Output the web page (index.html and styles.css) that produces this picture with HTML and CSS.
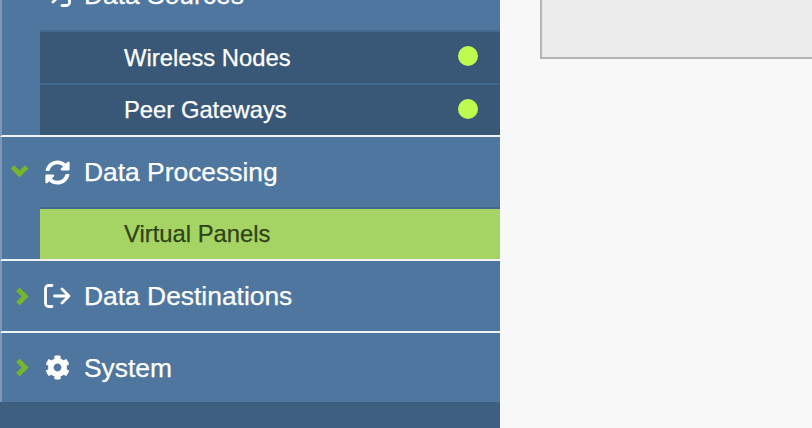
FILE: index.html
```html
<!DOCTYPE html>
<html lang="en">
<head>
<meta charset="utf-8">
<title>Sidebar</title>
<link rel="stylesheet" href="styles.css">
</head>
<body>
<svg class="defs" width="0" height="0" aria-hidden="true">
  <symbol id="chev-down" viewBox="0 0 18 13"><path d="M2.200 2.600 9 9.400l6.800-6.800" fill="none" stroke="currentColor" stroke-width="4.600"/></symbol>
  <symbol id="chev-right" viewBox="0 0 13 18"><path d="M2.600 2.200 9.400 9l-6.800 6.800" fill="none" stroke="currentColor" stroke-width="4.600"/></symbol>
  <symbol id="sync" viewBox="0 0 512 512"><path fill="currentColor" d="M370.72 133.28C339.458 104.008 298.888 87.962 255.848 88c-77.458.068-144.328 53.178-162.791 126.85-1.344 5.363-6.122 9.15-11.651 9.15H24.103c-7.498 0-13.194-6.807-11.807-14.176C33.933 94.924 134.813 8 256 8c66.448 0 126.791 26.136 171.315 68.685L463.03 40.97C478.149 25.851 504 36.559 504 57.941V192c0 13.255-10.745 24-24 24H345.941c-21.382 0-32.09-25.851-16.971-40.971l41.75-41.749zM32 296h134.059c21.382 0 32.09 25.851 16.971 40.971l-41.75 41.75c31.262 29.273 71.835 45.319 114.876 45.28 77.418-.07 144.315-53.144 162.787-126.849 1.344-5.363 6.122-9.15 11.651-9.15h57.304c7.498 0 13.194 6.807 11.807 14.176C478.067 417.076 377.187 504 256 504c-66.448 0-126.791-26.136-171.315-68.685L48.97 471.03C33.851 486.149 8 475.441 8 454.059V320c0-13.255 10.745-24 24-24z"/></symbol>
  <symbol id="cog" viewBox="0 0 512 512"><path fill="currentColor" d="M487.4 315.7l-42.6-24.6c4.3-23.2 4.3-47 0-70.2l42.6-24.6c4.9-2.8 7.1-8.6 5.5-14-11.1-35.6-30-67.8-54.7-94.6-3.8-4.1-10-5.1-14.8-2.3L380.8 110c-17.9-15.4-38.5-27.3-60.8-35.1V25.8c0-5.6-3.9-10.5-9.4-11.7-36.7-8.2-74.3-7.8-109.2 0-5.5 1.2-9.4 6.1-9.4 11.7V75c-22.2 7.9-42.8 19.8-60.8 35.1L88.7 85.5c-4.9-2.8-11-1.9-14.8 2.3-24.7 26.7-43.6 58.9-54.7 94.6-1.7 5.4.6 11.2 5.5 14L67.3 221c-4.3 23.2-4.3 47 0 70.2l-42.6 24.6c-4.9 2.8-7.1 8.6-5.5 14 11.1 35.6 30 67.8 54.7 94.6 3.8 4.1 10 5.1 14.8 2.3l42.6-24.6c17.9 15.4 38.5 27.3 60.8 35.1v49.2c0 5.6 3.9 10.5 9.4 11.7 36.7 8.2 74.3 7.8 109.2 0 5.5-1.2 9.4-6.1 9.4-11.7v-49.2c22.2-7.9 42.8-19.8 60.8-35.1l42.6 24.6c4.9 2.8 11 1.9 14.8-2.3 24.7-26.7 43.6-58.9 54.7-94.6 1.5-5.5-.7-11.3-5.6-14.1zM256 336c-44.1 0-80-35.9-80-80s35.9-80 80-80 80 35.9 80 80-35.9 80-80 80z"/></symbol>
  <symbol id="sign-out" viewBox="0 0 27 24"><path d="M8 1.500H4.500a3 3 0 0 0-3 3v15a3 3 0 0 0 3 3H8M10.500 12H25M18 5 25 12l-7 7" fill="none" stroke="currentColor" stroke-width="2.800" stroke-linecap="round" stroke-linejoin="round"/></symbol>
  <symbol id="sign-in" viewBox="0 0 27 24"><path d="M18 1.500h4.500a3 3 0 0 1 3 3v15a3 3 0 0 1-3 3H18M1.500 12H16M9 5l7 7-7 7" fill="none" stroke="currentColor" stroke-width="2.800" stroke-linecap="round" stroke-linejoin="round"/></symbol>
</svg>
<div class="app">
  <nav class="sidebar">
    <section class="section section-sources">
      <div class="head">
        <svg class="chevron chevron-down"><use href="#chev-down"/></svg>
        <svg class="icon icon-wide"><use href="#sign-in"/></svg>
        <span class="label">Data Sources</span>
      </div>
      <ul class="sublist">
        <li class="subrow subrow-first"><span>Wireless Nodes</span><i class="dot"></i></li>
        <li class="subrow"><span>Peer Gateways</span><i class="dot"></i></li>
      </ul>
    </section>
    <section class="section">
      <div class="head">
        <svg class="chevron chevron-down"><use href="#chev-down"/></svg>
        <svg class="icon"><use href="#sync"/></svg>
        <span class="label">Data Processing</span>
      </div>
      <ul class="sublist">
        <li class="subrow subrow-active"><span>Virtual Panels</span></li>
      </ul>
    </section>
    <section class="section">
      <div class="head">
        <svg class="chevron chevron-right"><use href="#chev-right"/></svg>
        <svg class="icon icon-wide"><use href="#sign-out"/></svg>
        <span class="label">Data Destinations</span>
      </div>
    </section>
    <section class="section section-last">
      <div class="head head-last">
        <svg class="chevron chevron-right"><use href="#chev-right"/></svg>
        <svg class="icon"><use href="#cog"/></svg>
        <span class="label">System</span>
      </div>
    </section>
    <div class="foot"></div>
  </nav>
  <main class="main">
    <div class="panel"></div>
  </main>
</div>
</body>
</html>
```
FILE: styles.css
```css
* { box-sizing: border-box; }
html, body { margin: 0; padding: 0; height: 100%; overflow: hidden; }
body { font-family: "Liberation Sans", Arial, sans-serif; background: #f8f8f8; }
.defs { display: block; height: 0; }
.app { display: flex; height: 428px; overflow: hidden; }
.sidebar {
  width: 500px;
  flex: none;
  margin-top: -40px;
  height: 468px;
  display: flex;
  flex-direction: column;
  background: #3f5f82;
  box-shadow: inset 2px 0 0 #7d98b6;
}
.section {
  background: #4f769f;
  border-left: 2px solid #7d98b6;
  border-bottom: 2px solid #f1f2f2;
}
.section-last { border-bottom: 0; }
.head {
  height: 70px;
  display: flex;
  align-items: center;
  color: #fff;
}
.head-last { height: 69px; }
.chevron { color: #78b42c; flex: none; }
.chevron-down { width: 19px; height: 14px; margin: -2px 16px 0 8px; }
.chevron-right { width: 14px; height: 19px; margin: 0 16px 0 13px; }
.icon { width: 25px; height: 25px; flex: none; margin-right: 14px; }
.icon-wide { width: 27px; height: 24px; margin-left: -1px; margin-right: 13px; }
.label { font-size: 26.4px; line-height: 30px; -webkit-text-stroke: 0.25px #fff; }
.sublist { list-style: none; margin: 0 0 0 38px; padding: 0; }
.subrow {
  height: 52px;
  border-top: 2px solid #44688e;
  background: #395877;
  color: #fff;
  font-size: 23.8px;
  -webkit-text-stroke: 0.25px currentColor;
  display: flex;
  align-items: center;
  justify-content: space-between;
  padding: 0 22px 0 84px;
}
.subrow-first { height: 53px; }
.subrow-active { background: #a5d364; color: #2f4317; }
.dot { width: 20px; height: 20px; border-radius: 50%; background: #bdfc4f; flex: none; margin-bottom: 3px; }
.foot { flex: 1; background: #3f5f82; }
.main { flex: 1; min-width: 0; padding-left: 40px; overflow: hidden; }
.panel {
  height: 59px;
  margin-right: -10px;
  background: #ececec;
  border-left: 2px solid #b5b5b5;
  border-bottom: 2px solid #b5b5b5;
}
```
